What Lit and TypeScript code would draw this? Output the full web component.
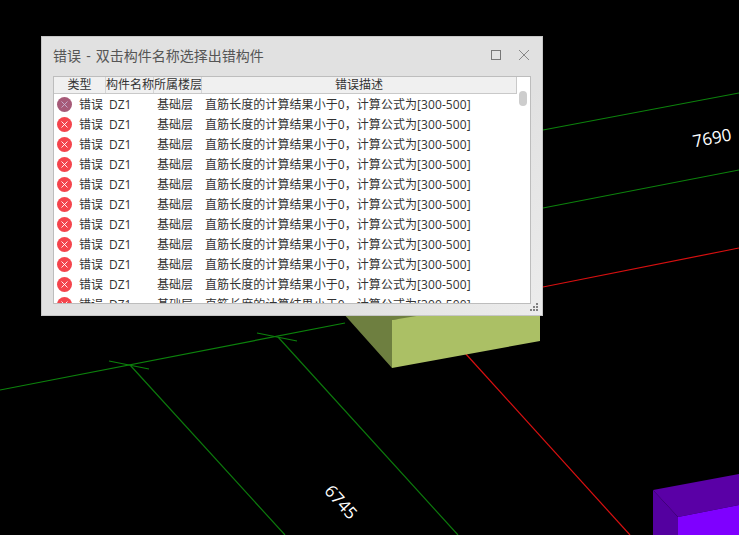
import { LitElement, html, css, svg } from "lit";
import { customElement } from "lit/decorators.js";

const rows = Array.from({ length: 11 }, (_, i) => i);

@customElement("app-root")
export class AppRoot extends LitElement {
  static styles = css`
    :host {
      display: block;
      position: relative;
      width: 739px;
      height: 535px;
      background: #000;
      overflow: hidden;
      font-family: "Open Sans", "Noto Sans CJK SC", sans-serif;
    }
    .scene {
      position: absolute;
      inset: 0;
      width: 739px;
      height: 535px;
    }
    .dim {
      fill: #fff;
      font-family: "Open Sans", sans-serif;
      font-size: 17px;
    }
    .win {
      position: absolute;
      left: 41px;
      top: 36px;
      width: 502px;
      height: 280px;
      box-sizing: border-box;
      background: linear-gradient(135deg, #e1e1e1 70%, #ececec 100%);
      border: 1px solid #c6c6c6;
      display: flex;
      flex-direction: column;
      padding: 0 11px 11px 11px;
    }
    .titlebar {
      height: 39px;
      flex: none;
      box-sizing: border-box;
      padding-bottom: 3px;
      display: flex;
      align-items: center;
      color: #555;
      font-size: 14px;
    }
    .title { flex: 1; word-spacing: 1.5px; }
    .btn { width: 12px; height: 12px; display: block; margin-right: 16px; }
    .btn.close { width: 12px; height: 12px; margin-right: 1px; }
    .list {
      flex: 1;
      min-height: 0;
      position: relative;
      background: #fff;
      border: 1px solid #bdbdbd;
      overflow: hidden;
      color: #333;
      font-size: 12px;
    }
    .head, .row {
      display: grid;
      grid-template-columns: 52px 48px 48px 314px;
      line-height: 20px;
    }
    .head {
      height: 16px;
      line-height: 16px;
      width: 462px;
      background: #f0f0f0;
      border-bottom: 1px solid #c9c9c9;
      border-right: 1px solid #c9c9c9;
      text-align: center;
    }
    .head span { border-right: 1px solid #d4d4d4; white-space: nowrap; box-sizing: border-box; }
    .head span:last-child { border-right: none; }
    .row { height: 20px; grid-template-rows: 20px; white-space: nowrap; }
    .row > div { box-sizing: border-box; }
    .type { display: flex; align-items: center; padding-left: 3px; gap: 7px; }
    .type span { margin-top: 2px; }
    .dot { width: 15px; height: 15px; display: block; flex: none; }
    .name { padding: 1px 0 0 3px; }
    .floor { padding: 1px 0 0 3px; }
    .desc { padding: 1px 0 0 3px; letter-spacing: 0.07px; }
    .thumb {
      position: absolute;
      right: 3px;
      top: 14px;
      width: 8px;
      height: 15px;
      border-radius: 4px;
      background: #cdcdcd;
    }
    .grip {
      position: absolute;
      right: 3px;
      bottom: 3px;
      width: 10px;
      height: 10px;
    }
  `;

  private scene() {
    return svg`
      <svg class="scene" viewBox="0 0 739 535">
        <g fill="none" stroke-width="1.2">
          <path d="M0 390 L345 323" stroke="#0c820c" />
          <path d="M109 361 L149 369 M257 333 L297 341" stroke="#0c820c" />
          <path d="M130 365 L285 535 M278 337 L458 535" stroke="#0c780c" />
          <path d="M543 130 L739 93 M543 208 L739 170" stroke="#0c820c" />
          <path d="M543 287 L739 248" stroke="#d81010" />
          <path d="M465 353 L630 535" stroke="#d81010" />
        </g>
        <polygon points="342,312 480,312 392,320 392,368" fill="#6e7f40" />
        <polygon points="392,320 540,296 540,341 392,368" fill="#abc065" />
        <polygon points="653,490 739,474 739,505 678,517" fill="#5a00a6" />
        <polygon points="653,490 678,517 678,535 653,535" fill="#5400a0" />
        <polygon points="678,517 739,505 739,535 678,535" fill="#7f00ff" />
        <text class="dim" x="712" y="144" text-anchor="middle" transform="rotate(-11 712 138)">7690</text>
        <text class="dim" x="341" y="508" text-anchor="middle" transform="rotate(48 341 502)">6745</text>
      </svg>`;
  }

  private dot(first: boolean) {
    const fill = first ? "#a65a78" : "#f4444c";
    const mark = first ? "#c8b4d2" : "#fff";
    return html`<svg class="dot" viewBox="0 0 15 15">
      <circle cx="7.5" cy="7.5" r="7.5" fill=${fill}></circle>
      <path d="M4.5 4.5 L10.5 10.5 M10.5 4.5 L4.5 10.5" stroke=${mark} stroke-width="0.9" fill="none"></path>
    </svg>`;
  }

  render() {
    return html`
      ${this.scene()}
      <div class="win">
        <div class="titlebar">
          <span class="title">错误 - 双击构件名称选择出错构件</span>
          <svg class="btn" viewBox="0 0 12 12">
            <rect x="1.5" y="1.5" width="9" height="9" fill="none" stroke="#777"></rect>
          </svg>
          <svg class="btn close" viewBox="0 0 12 12">
            <path d="M1 1 L11 11 M11 1 L1 11" stroke="#888" fill="none"></path>
          </svg>
        </div>
        <div class="list">
          <div class="head">
            <span>类型</span><span>构件名称</span><span>所属楼层</span><span>错误描述</span>
          </div>
          <div class="rows">
            ${rows.map(
              (i) => html`<div class="row">
                <div class="type">${this.dot(i === 0)}<span>错误</span></div>
                <div class="name">DZ1</div>
                <div class="floor">基础层</div>
                <div class="desc">直筋长度的计算结果小于0，计算公式为[300-500]</div>
              </div>`
            )}
          </div>
          <div class="thumb"></div>
        </div>
        <svg class="grip" viewBox="0 0 10 10">
          <g fill="#808080">
            <rect x="7" y="1" width="2" height="2"></rect>
            <rect x="4" y="4" width="2" height="2"></rect>
            <rect x="7" y="4" width="2" height="2"></rect>
            <rect x="1" y="7" width="2" height="2"></rect>
            <rect x="4" y="7" width="2" height="2"></rect>
            <rect x="7" y="7" width="2" height="2"></rect>
          </g>
        </svg>
      </div>
    `;
  }
}
